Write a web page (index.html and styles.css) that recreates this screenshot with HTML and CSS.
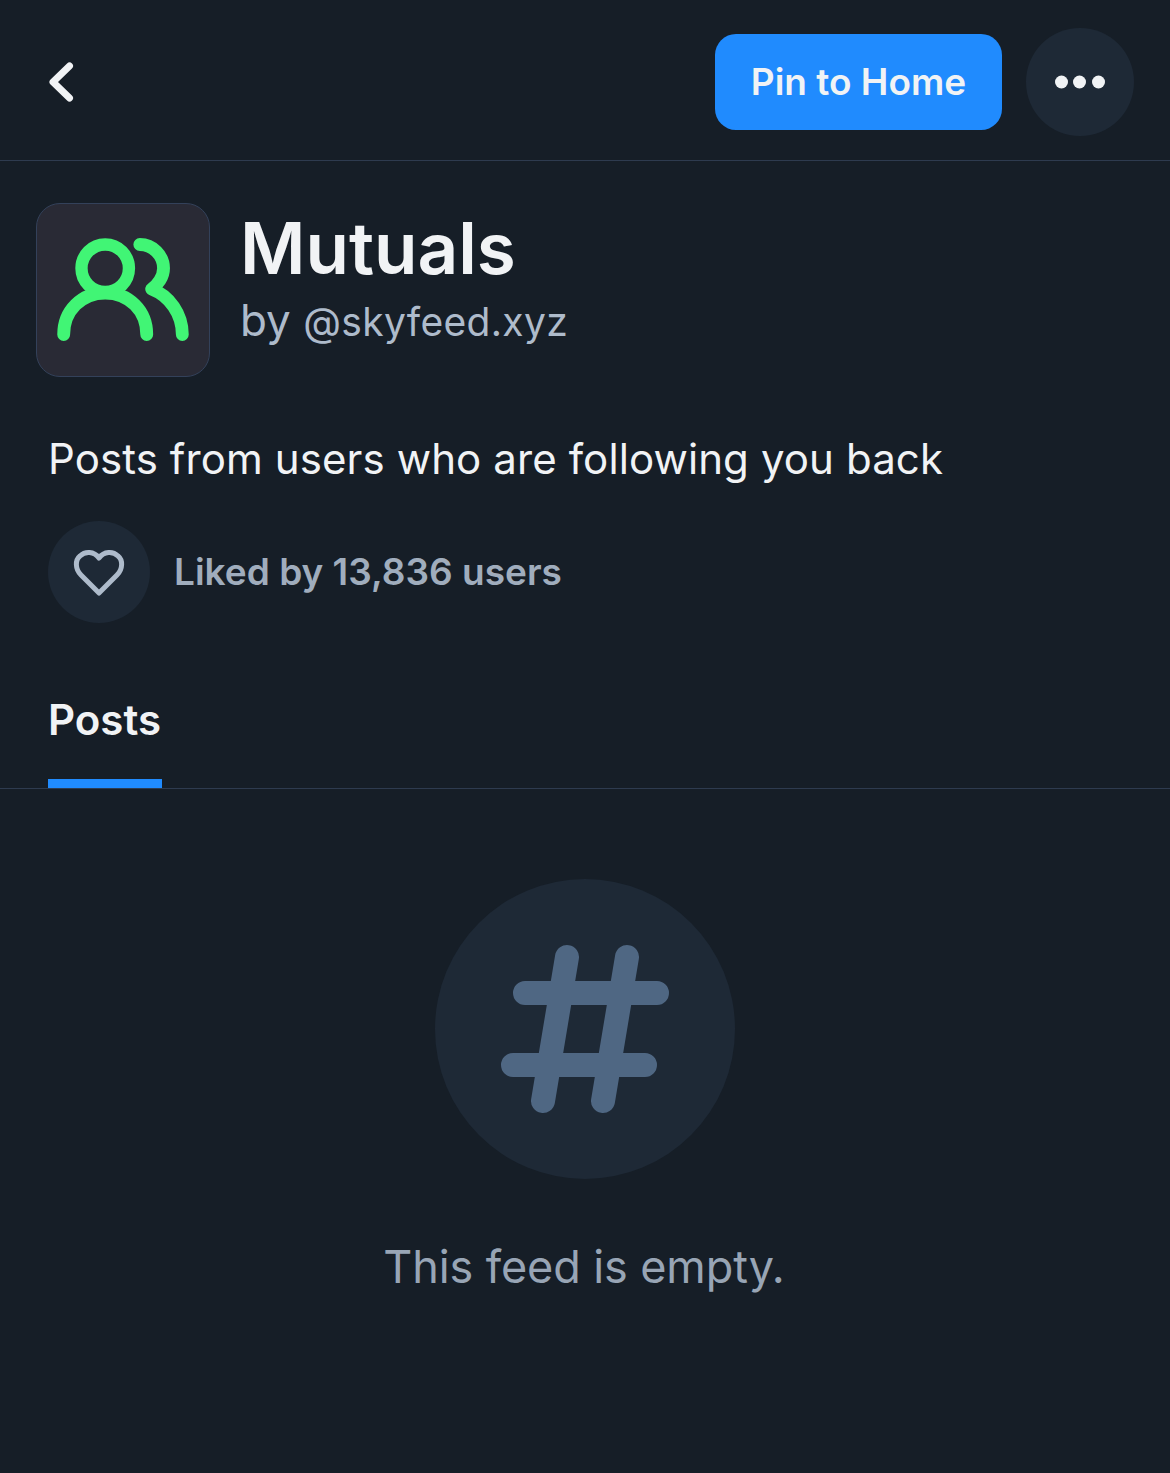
FILE: index.html
```html
<!DOCTYPE html>
<html lang="en">
<head>
<meta charset="utf-8">
<title>Mutuals</title>
<link rel="stylesheet" href="styles.css">
</head>
<body>
<header class="topbar">
  <button class="back" aria-label="Back">
    <svg class="back-icon" viewBox="0 0 36 48" width="36" height="48"><path d="M25.5 8 9 24l16.5 16" /></svg>
  </button>
  <div class="top-actions">
    <button class="pin">Pin to Home</button>
    <button class="more" aria-label="More">
      <svg viewBox="0 0 54 14" width="54" height="14"><circle cx="8.5" cy="7" r="6.5"/><circle cx="26.5" cy="7" r="6.5"/><circle cx="45.5" cy="7" r="6.5"/></svg>
    </button>
  </div>
</header>
<section class="feed-head">
  <div class="avatar">
    <svg viewBox="0 0 174 174" width="172" height="172">
      <circle cx="69" cy="65" r="24"/>
      <path class="thick" d="M27 132c0-24 18-42 42-42s42 18 42 42"/>
      <path class="thick" d="M104 41c13 0 24 11 24 24 0 9-6 17-12 21 18 7 31 25 31 46"/>
    </svg>
  </div>
  <div class="titles">
    <h1>Mutuals</h1>
    <p class="by">by <span class="handle">@skyfeed.xyz</span></p>
  </div>
</section>
<p class="desc">Posts from users who are following you back</p>
<div class="likes">
  <span class="heart">
    <svg viewBox="0 0 54 50" width="54" height="50"><path d="M27 46 9 28C3 22 3 13 8 9c5-5 14-5 19 2 5-7 14-7 19-2 5 4 5 13-1 19z"/></svg>
  </span>
  <span class="like-text">Liked by 13,836 users</span>
</div>
<nav class="tabs"><div class="tab">Posts</div></nav>
<section class="empty">
  <div class="empty-circle">
    <svg viewBox="0 0 300 300" width="300" height="300">
      <path d="M132 78 108 222M192 78 168 222M90 114H222M78 186H210"/>
    </svg>
  </div>
  <p class="empty-text">This feed is empty.</p>
</section>
</body>
</html>
```
FILE: styles.css
```css
* { box-sizing: border-box; }
html, body { margin: 0; padding: 0; }
body {
  width: 1170px;
  height: 1473px;
  overflow: hidden;
  background: #161e27;
  font-family: Inter, "Noto Sans", sans-serif;
  color: #f1f3f5;
}
button { border: 0; padding: 0; font: inherit; color: inherit; background: none; }
.topbar {
  height: 161px;
  border-bottom: 1px solid #2e3b4f;
  display: flex;
  align-items: center;
  justify-content: space-between;
  padding: 4px 36px 0 44px;
}
.back { display: flex; }
.back-icon path { fill: none; stroke: #f1f3f5; stroke-width: 7; stroke-linecap: round; stroke-linejoin: round; }
.top-actions { display: flex; align-items: center; gap: 24px; }
.pin {
  width: 287px;
  height: 96px;
  padding-bottom: 2px;
  border-radius: 21px;
  background: #208bfe;
  font-size: 37px;
  font-weight: 600;
}
.more {
  width: 108px;
  height: 108px;
  border-radius: 50%;
  background: #1e2936;
  display: flex;
  align-items: center;
  justify-content: center;
}
.more svg { fill: #f1f3f5; }
.feed-head {
  display: flex;
  gap: 30px;
  padding: 42px 36px 0;
}
.avatar {
  width: 174px;
  height: 174px;
  border: 1px solid #33415a;
  border-radius: 24px;
  background: #292a35;
}
.avatar svg { display: block; fill: none; stroke: #41f575; stroke-width: 12.5; stroke-linecap: round; stroke-linejoin: round; }
.avatar .thick { stroke-width: 13; }
.titles { display: flex; flex-direction: column; }
h1 {
  margin: 0;
  font-size: 71px;
  line-height: 90px;
  font-weight: 600;
}
.by {
  margin: 0;
  font-size: 44px;
  line-height: 54px;
  color: #aebbcb;
}
.handle { font-size: 39px; letter-spacing: 0.35px; }
.desc {
  margin: 53px 48px 0;
  font-size: 42px;
  line-height: 58px;
  letter-spacing: 0.1px;
}
.likes {
  display: flex;
  align-items: center;
  gap: 24px;
  margin: 33px 48px 0;
}
.heart {
  width: 102px;
  height: 102px;
  border-radius: 50%;
  background: #1e2936;
  display: flex;
  align-items: center;
  justify-content: center;
}
.heart svg { fill: none; stroke: #aebbcb; stroke-width: 5; stroke-linejoin: round; }
.like-text {
  font-size: 37px;
  font-weight: 600;
  color: #a0adbd;
  margin-bottom: 1px;
}
.tabs {
  height: 166px;
  border-bottom: 1px solid #2e3b4f;
  padding: 0 48px;
  display: flex;
  align-items: flex-end;
}
.tab {
  width: 114px;
  height: 120px;
  padding-right: 2px;
  border-bottom: 9px solid #208bfe;
  font-size: 42px;
  font-weight: 600;
  line-height: 104px;
  text-align: center;
  white-space: nowrap;
}
.empty { display: flex; flex-direction: column; align-items: center; padding-top: 90px; }
.empty-circle {
  width: 300px;
  height: 300px;
  border-radius: 50%;
  background: #1e2936;
}
.empty-circle svg { display: block; fill: none; stroke: #4f6783; stroke-width: 24; stroke-linecap: round; }
.empty-text {
  margin: 58px 0 0;
  padding-right: 2px;
  font-size: 45px;
  line-height: 60px;
  color: #98a5b5;
  letter-spacing: -0.1px;
}
```
